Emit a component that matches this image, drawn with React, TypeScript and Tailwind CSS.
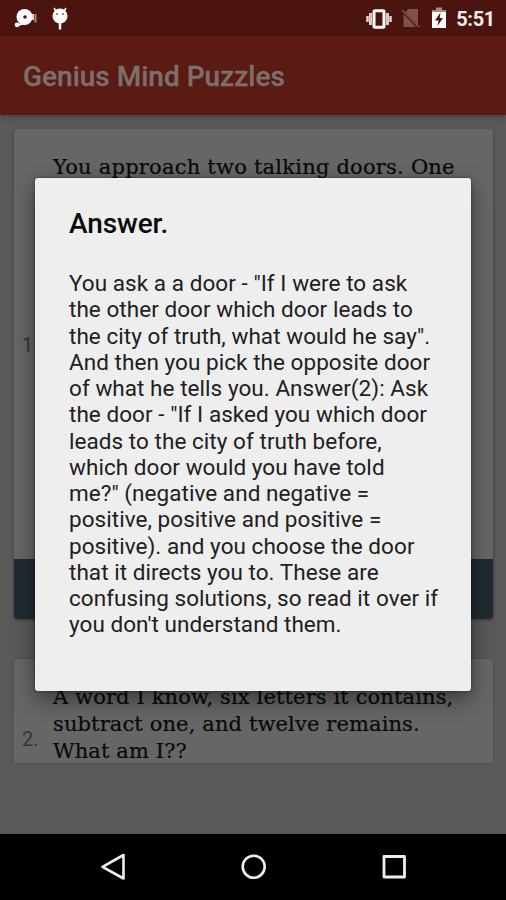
const answerLines = [
  { text: 'You ask a a door - "If I were to ask' },
  { text: "the other door which door leads to" },
  { text: 'the city of truth, what would he say".' },
  { text: "And then you pick the opposite door" },
  { text: "of what he tells you. Answer(2): Ask" },
  { text: 'the door - "If I asked you which door' },
  { text: "leads to the city of truth before," },
  { text: "which door would you have told" },
  { text: 'me?" (negative and negative =' },
  { text: "positive, positive and positive =" },
  { text: "positive). and you choose the door" },
  { text: "that it directs you to. These are" },
  { text: "confusing solutions, so read it over if" },
  { text: "you don't understand them." },
];

function StatusBar() {
  return (
    <header className="flex h-9 shrink-0 items-center justify-between bg-[#4b140e] pl-3.5 pr-[11px]">
      <div className="flex items-center gap-3">
        <svg width="25" height="24" viewBox="0 0 25 24">
          <circle cx="10.5" cy="11" r="8" fill="#fff" />
          <circle cx="3" cy="18.8" r="2.4" fill="#fff" />
          <path d="M2 20 10 17" stroke="#fff" strokeWidth="2" />
          <circle cx="11" cy="11" r="1.8" fill="#4b140e" />
          <path d="M19 8v6" stroke="#e1d6d5" strokeWidth="2" />
          <path d="M21.5 8v8.5" stroke="#a58986" strokeWidth="2" />
        </svg>
        <svg width="18" height="24" viewBox="0 0 18 24">
          <path d="m3 2 2.5 4M15 2l-2.5 4" stroke="#fff" strokeWidth="1.5" />
          <circle cx="9" cy="10" r="7.5" fill="#fff" />
          <path d="M9 17v5.5" stroke="#fff" strokeWidth="2.5" strokeLinecap="round" />
          <circle cx="6" cy="8" r="1" fill="#796966" />
          <circle cx="12" cy="8" r="1" fill="#796966" />
        </svg>
      </div>
      <div className="flex items-center">
        <svg className="mt-0.5" width="28" height="24" viewBox="0 0 28 24">
          <rect x="9" y="3.8" width="10" height="16.4" rx="1" fill="none" stroke="#fff" strokeWidth="3" />
          <path d="M5.5 6v12M22.5 6v12" stroke="#d8cac8" strokeWidth="3" />
          <path d="M2.5 9v6M25.5 9v6" stroke="#e1d6d5" strokeWidth="2.5" />
        </svg>
        <svg className="ml-2" width="20" height="22" viewBox="0 0 20 22">
          <path d="M7.5 2H17v15.5L4.2 5.2ZM2.5 7 15 20H2.5Z" fill="#80524e" />
          <path d="m1 3 17 17" stroke="#80524e" strokeWidth="1.7" />
        </svg>
        <svg className="ml-[10px] mr-px" width="16" height="24" viewBox="0 0 16 24">
          <path d="M5 1.5h6V4h4v5H1V4h4Z" fill="#a58986" />
          <path d="M1 6h14v16H1Z" fill="#fff" />
          <path d="M9.5 6.5 4 14.5h3.5L6.5 20 12 12H8.7Z" fill="#4b140e" />
        </svg>
        <span className="ml-2 mt-0.5 text-[20px] font-bold leading-none tracking-[-0.3px] text-[#f3eeed]">5:51</span>
      </div>
    </header>
  );
}

function NavigationBar() {
  return (
    <nav className="flex h-[66px] shrink-0 items-center justify-between bg-black pl-[100px] pr-[98px]">
      <svg width="28" height="30" viewBox="0 0 28 30" fill="none" stroke="#eee" strokeWidth="2.6" strokeLinejoin="round">
        <path d="M23.5 3v23.5L2.5 14.8Z" />
      </svg>
      <svg width="28" height="30" viewBox="0 0 28 30" fill="none" stroke="#eee" strokeWidth="2.6">
        <circle cx="13.7" cy="14.7" r="11" />
      </svg>
      <svg width="28" height="30" viewBox="0 0 28 30" fill="none" stroke="#eee" strokeWidth="2.8" strokeLinejoin="round">
        <rect x="4" y="4.5" width="20.5" height="20.5" />
      </svg>
    </nav>
  );
}

export default function App() {
  return (
    <div className="relative flex h-[900px] w-[506px] flex-col overflow-hidden bg-[#595959] font-[Roboto,sans-serif]">
      <StatusBar />
      <div className="z-0 flex h-[79px] shrink-0 items-center bg-[#5b1a12] pl-[23px] pt-[3px] shadow-[0_2px_5px_rgba(0,0,0,0.25)]">
        <h1 className="text-[28px] font-medium leading-none text-[#7d6f6c] [-webkit-text-stroke:0.3px_#7d6f6c]">
          Genius Mind Puzzles
        </h1>
      </div>

      <main className="flex min-h-0 flex-1 flex-col pl-3.5 pr-[13px] pt-3.5">
        <section className="flex h-[490px] shrink-0 flex-col overflow-hidden rounded-[3px] bg-[#666] shadow-[0_1px_3px_rgba(0,0,0,0.35)]">
          <div className="flex flex-1">
            <span className="w-[39px] self-center pl-2 pt-0.5 text-[20px] text-[#343434]">1.</span>
            <p className="whitespace-nowrap pt-[25px] font-['DejaVu_Serif',serif] text-[21px] leading-[27px] tracking-[0.22px] text-[#090909] [-webkit-text-stroke:0.2px_#090909]">
              You approach two talking doors. One
            </p>
          </div>
          <div className="h-[60px] bg-[#202b31]" />
        </section>
        <section className="mt-10 flex h-[104px] shrink-0 overflow-hidden rounded-t-[3px] bg-[#666] shadow-[0_0_2px_rgba(0,0,0,0.25)]">
          <span className="w-[39px] pl-2 pt-[65px] text-[20px] text-[#343434]">2.</span>
          <p className="whitespace-nowrap pt-[25px] font-['DejaVu_Serif',serif] text-[21px] leading-[27px] tracking-[0.12px] text-[#090909] [-webkit-text-stroke:0.2px_#090909]">
            A word I know, six letters it contains,
            <br />
            subtract one, and twelve remains.
            <br />
            What am I??
          </p>
        </section>
      </main>
      <NavigationBar />

      <div
        role="dialog"
        aria-labelledby="answer-title"
        className="absolute left-[35px] top-[178px] h-[513px] w-[436px] rounded-[3px] bg-[#eee] px-[34px] pt-[29px] shadow-[0_8px_22px_rgba(0,0,0,0.45),0_0_3px_rgba(0,0,0,0.5)]"
      >
        <h2 id="answer-title" className="text-[28px] font-medium leading-[34px] tracking-[-0.1px] text-[#0b0b0b]">Answer.</h2>
        <div className="mt-[29px] whitespace-nowrap text-[22.5px] leading-[26.25px] tracking-[0.05px] text-[#202020]">
          {answerLines.map((line) => (
            <p key={line.text}>{line.text}</p>
          ))}
        </div>
      </div>
    </div>
  );
}
